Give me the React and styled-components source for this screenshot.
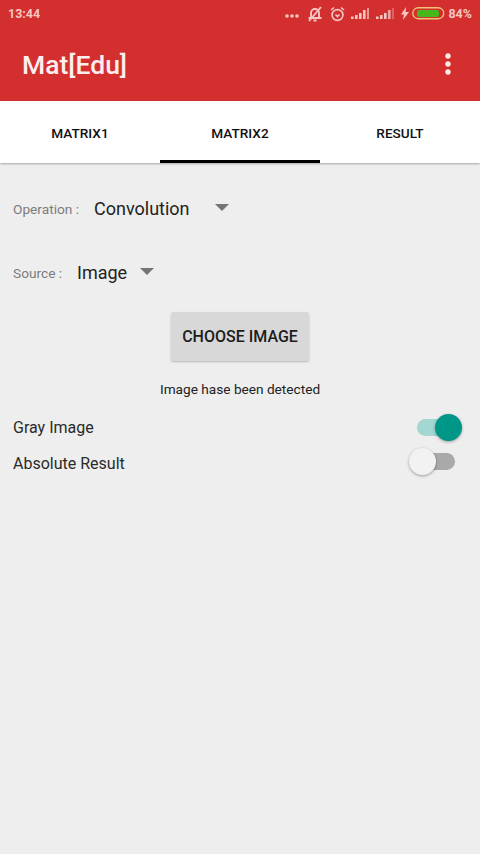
import React from "react";
import styled, { createGlobalStyle } from "styled-components";

const Global = createGlobalStyle`
  html, body { margin: 0; padding: 0; background: #eeeeee; }
  body { font-family: Roboto, "Liberation Sans", sans-serif; }
`;

const Page = styled.div`
  width: 480px;
  height: 854px;
  overflow: hidden;
  background: #eeeeee;
  display: flex;
  flex-direction: column;
`;
const Header = styled.header`
  background: #d32f2f;
  height: 101px;
  display: flex;
  flex-direction: column;
  color: #fff;
`;
const StatusBar = styled.div`
  height: 27px;
  display: flex;
  align-items: center;
  justify-content: space-between;
  padding: 0 8px;
  color: #f6c6c2;
  font-size: 12.5px;
  font-weight: 700;
`;
const StatusIcons = styled.div`
  display: flex;
  align-items: center;
`;
const Icon = styled.svg`
  flex: none;
  margin-right: ${(p) => p.$gap || 0}px;
`;
const AppBar = styled.div`
  flex: 1;
  display: flex;
  align-items: center;
  justify-content: space-between;
  padding: 1px 29px 2px 22px;
`;
const Title = styled.div`
  font-size: 26.5px;
  font-weight: 500;
  color: #fdeeee;
  padding-top: 2px;
`;
const Tabs = styled.nav`
  height: 62px;
  background: #fff;
  display: flex;
  box-shadow: 0 1px 2px rgba(0, 0, 0, 0.3);
`;
const Tab = styled.div`
  flex: 1;
  display: flex;
  align-items: center;
  justify-content: center;
  font-size: 13.6px;
  font-weight: 500;
  color: #111;
  padding-top: 2px;
  box-shadow: ${(p) => (p.$active ? "inset 0 -3px 0 #000" : "none")};
`;
const Content = styled.main`
  flex: 1;
  display: flex;
  flex-direction: column;
  padding: 0 13px;
`;
const SelectRow = styled.div`
  display: flex;
  align-items: center;
  height: 48px;
  margin-top: ${(p) => p.$top}px;
`;
const Label = styled.span`
  font-size: 13.7px;
  color: #7c7c7c;
  width: ${(p) => p.$w}px;
  flex: none;
`;
const Value = styled.span`
  font-size: 18px;
  color: #222;
  width: ${(p) => p.$w}px;
  flex: none;
  margin-bottom: 2px;
`;
const Arrow = styled.span`
  width: 0;
  height: 0;
  border-left: 7px solid transparent;
  border-right: 7px solid transparent;
  border-top: 7px solid #757575;
  margin-top: -3px;
`;
const ChooseButton = styled.button`
  align-self: center;
  width: 138px;
  height: 49px;
  margin-top: 15px;
  border: none;
  border-radius: 2px;
  background: #d8d8d8;
  color: #1c1c1c;
  font-family: inherit;
  font-size: 16px;
  font-weight: 500;
  box-shadow: 0 1px 2px rgba(0, 0, 0, 0.22);
  padding: 0;
`;
const Notice = styled.div`
  text-align: center;
  font-size: 13.65px;
  color: #222;
  margin-top: 19px;
  line-height: 18px;
`;
const SwitchRow = styled.div`
  display: flex;
  align-items: center;
  justify-content: space-between;
  height: 36px;
  font-size: 16px;
  color: #2a2a2a;
  margin-top: ${(p) => p.$top || 0}px;
`;
const Track = styled.div`
  position: relative;
  width: 38px;
  height: 17px;
  border-radius: 9px;
  margin-right: 12px;
  margin-bottom: ${(p) => (p.$on ? "0" : "3px")};
  background: ${(p) => (p.$on ? "#a3d7d2" : "#a9a9a9")};
`;
const Thumb = styled.div`
  position: absolute;
  top: -5px;
  width: 27px;
  height: 27px;
  border-radius: 50%;
  left: ${(p) => (p.$on ? "18px" : "-8px")};
  background: ${(p) => (p.$on ? "#009688" : "#f2f2f2")};
  box-shadow: 0 1px 3px rgba(0, 0, 0, 0.35);
`;

const Dots = () => (
  <Icon $gap={8} width="14" height="14" viewBox="0 0 14 14">
    <g fill="#f6c6c2"><circle cx="2" cy="9" r="1.8" /><circle cx="7" cy="9" r="1.8" /><circle cx="12" cy="9" r="1.8" /></g>
  </Icon>
);
const Mute = () => (
  <Icon $gap={7} width="16" height="16" viewBox="0 0 16 16" fill="none" stroke="#f6c6c2" strokeWidth="1.9">
    <path d="M4 11V7a4 4 0 0 1 8 0v4M1.5 12h13M6.5 14.5h3" />
    <path d="M2 15L14 1" />
  </Icon>
);
const Alarm = () => (
  <Icon $gap={6} width="15" height="16" viewBox="0 0 15 16" fill="none" stroke="#f6c6c2" strokeWidth="1.6">
    <circle cx="7.5" cy="9" r="5.4" />
    <path d="M1 4l3-2.5M14 4l-3-2.5" />
    <path d="M5.5 8.5l2 2 2-2" />
  </Icon>
);
const Signal = ({ weak }) => (
  <Icon $gap={7} width="18" height="13" viewBox="0 0 18 13" fill="#f6c6c2">
    <rect x="0" y="9.5" width="2.6" height="2.5" />
    <rect x="4" y="8" width="2.6" height="4" />
    <rect x="8" y="6" width="2.6" height="6" />
    <rect x="12" y="3" width="2.6" height="9" opacity={weak ? 0.8 : 1} />
    <rect x="16" y="1" width="2" height="11" opacity={weak ? 0.35 : 0.7} />
  </Icon>
);
const Bolt = () => (
  <Icon $gap={3} width="8" height="13" viewBox="0 0 8 13" fill="#f6c6c2">
    <path d="M5 0L0 7.5h3L2 13l6-8H4.6z" />
  </Icon>
);
const Battery = () => (
  <Icon $gap={3} width="33" height="13" viewBox="0 0 33 13">
    <rect x="0.75" y="0.75" width="31" height="11" rx="5.5" fill="none" stroke="#f0c27c" strokeWidth="1.3" />
    <rect x="5" y="3" width="22" height="7" rx="2" fill="#46b81c" />
  </Icon>
);
const Kebab = () => (
  <Icon width="6" height="22" viewBox="0 0 6 22" fill="#fdeae4">
    <circle cx="3" cy="3" r="2.7" /><circle cx="3" cy="11" r="2.7" /><circle cx="3" cy="19" r="2.7" />
  </Icon>
);

export default function App() {
  return (
    <Page>
      <Global />
      <Header>
        <StatusBar>
          <span>13:44</span>
          <StatusIcons>
            <Dots /><Mute /><Alarm /><Signal /><Signal weak /><Bolt /><Battery />
            <span>84%</span>
          </StatusIcons>
        </StatusBar>
        <AppBar>
          <Title>Mat[Edu]</Title>
          <Kebab />
        </AppBar>
      </Header>
      <Tabs>
        <Tab>MATRIX1</Tab>
        <Tab $active>MATRIX2</Tab>
        <Tab>RESULT</Tab>
      </Tabs>
      <Content>
        <SelectRow $top={22}>
          <Label $w={81}>Operation :</Label>
          <Value $w={121}>Convolution</Value>
          <Arrow />
        </SelectRow>
        <SelectRow $top={16}>
          <Label $w={64}>Source :</Label>
          <Value $w={63}>Image</Value>
          <Arrow />
        </SelectRow>
        <ChooseButton>CHOOSE IMAGE</ChooseButton>
        <Notice>Image hase been detected</Notice>
        <SwitchRow $top={11}>
          Gray Image
          <Track $on><Thumb $on /></Track>
        </SwitchRow>
        <SwitchRow>
          Absolute Result
          <Track><Thumb /></Track>
        </SwitchRow>
      </Content>
    </Page>
  );
}
